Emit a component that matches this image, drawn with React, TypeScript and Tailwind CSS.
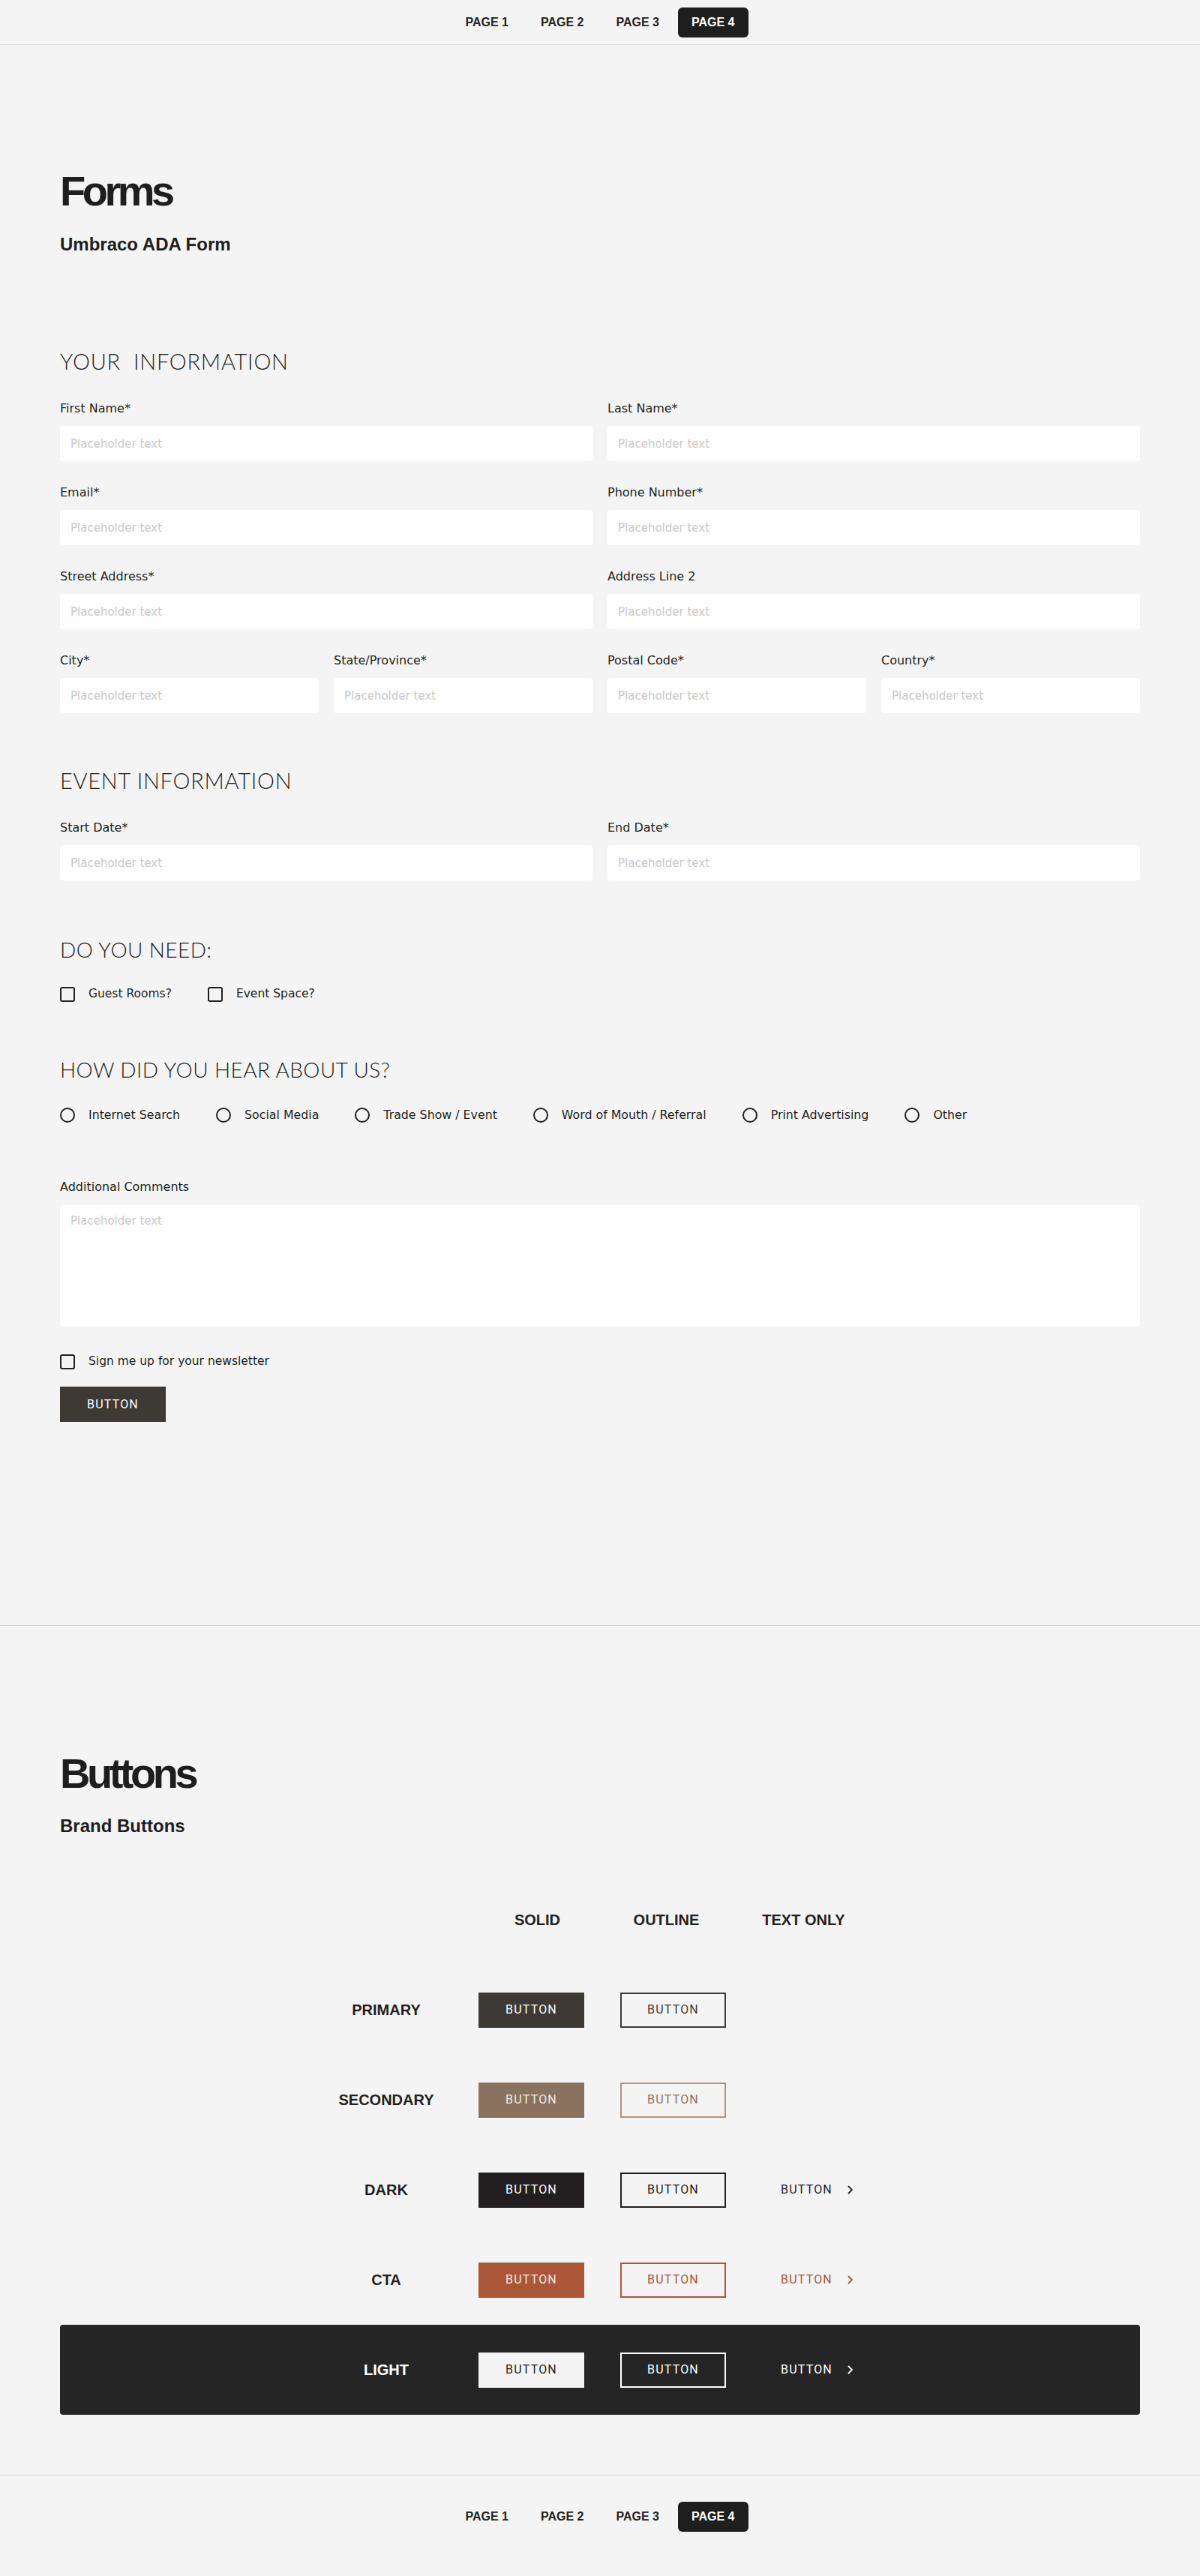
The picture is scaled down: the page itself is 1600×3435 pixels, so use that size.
import React from "react";

const arial = "font-['Liberation_Sans',Arial,sans-serif]";
const body = "font-['DejaVu_Sans',sans-serif]";
const display = "font-['Lato',sans-serif] font-light";
const btnFont = "font-['Roboto',sans-serif]";

const pages = ["PAGE 1", "PAGE 2", "PAGE 3", "PAGE 4"];

function PageNav({ top }: { top?: boolean }) {
  return (
    <nav
      className={
        top
          ? "flex justify-center gap-[7px] pt-[10px] pb-[9px] border-b border-[#dcdcdc]"
          : "flex justify-center gap-[7px] pt-[35px] pb-[60px] border-t border-[#dcdcdc]"
      }
    >
      {pages.map((p) => (
        <a
          key={p}
          href="#"
          className={`${arial} h-10 px-[18px] flex items-center rounded-md text-[16px] font-bold ${
            p === "PAGE 4" ? "bg-[#1e1e1e] text-white" : "text-[#222]"
          }`}
        >
          {p}
        </a>
      ))}
    </nav>
  );
}

function SectionTitle({
  children,
  className = "",
  small,
}: {
  children: React.ReactNode;
  className?: string;
  small?: boolean;
}) {
  return (
    <h3
      className={`${display} ${
        small ? "text-[28px] tracking-[0.015em]" : "text-[29px] tracking-[0.025em]"
      } leading-none text-[#231f20] whitespace-pre ${className}`}
    >
      {children}
    </h3>
  );
}

function Field({ label, span = "col-span-2" }: { label: string; span?: string }) {
  return (
    <div className={span}>
      <label className={`${body} block text-[16px] leading-[20px] text-[#231f20] mb-[13px]`}>{label}</label>
      <input
        readOnly
        placeholder="Placeholder text"
        className={`${body} w-full h-[47px] bg-white rounded-[4px] px-[14px] text-[15px] outline-none placeholder:text-[#c8c8c8]`}
      />
    </div>
  );
}

function Check({ label, round }: { label: string; round?: boolean }) {
  return (
    <label className="flex items-center gap-[18px] h-5">
      <span
        className={`w-5 h-5 border-2 border-[#231f20] ${round ? "rounded-full" : "rounded-[3px]"}`}
      />
      <span className={`${body} ${round ? "text-[15.8px]" : "text-[15.5px]"} text-[#231f20]`}>{label}</span>
    </label>
  );
}

function Chevron() {
  return (
    <svg width="9" height="12" viewBox="0 0 9 12" fill="none">
      <polyline points="2,1 7,6 2,11" stroke="currentColor" strokeWidth="1.8" />
    </svg>
  );
}

type Variant = {
  name: string;
  solid: string;
  outline: string;
  text?: string;
  label: string;
  row?: string;
};

const variants: Variant[] = [
  {
    name: "PRIMARY",
    solid: "bg-[#3d3935] text-white",
    outline: "border-[#3d3935] text-[#3d3935]",
    label: "text-[#231f20]",
  },
  {
    name: "SECONDARY",
    solid: "bg-[#8a725f] text-[#f1ece8]",
    outline: "border-[#ab9484] text-[#8a725f]",
    label: "text-[#231f20]",
  },
  {
    name: "DARK",
    solid: "bg-[#231f20] text-white",
    outline: "border-[#231f20] text-[#231f20]",
    text: "text-[#231f20]",
    label: "text-[#231f20]",
  },
  {
    name: "CTA",
    solid: "bg-[#ab5637] text-[#f7ebe6]",
    outline: "border-[#ab5637] text-[#ab5637]",
    text: "text-[#ab5637]",
    label: "text-[#231f20]",
  },
  {
    name: "LIGHT",
    solid: "bg-[#f4f4f4] text-[#231f20]",
    outline: "border-white text-white",
    text: "text-white",
    label: "text-white",
    row: "bg-[#252525] rounded-[4px]",
  },
];

function ButtonRow({ v }: { v: Variant }) {
  return (
    <div className={`flex justify-center items-center h-[120px] pr-[10px] ${v.row ?? ""}`}>
      <div className={`${arial} w-[170px] text-center text-[20px] font-bold ${v.label}`}>{v.name}</div>
      <button
        className={`${btnFont} ml-[38px] w-[141px] h-[47px] text-[16px] tracking-[1.2px] ${v.solid}`}
      >
        BUTTON
      </button>
      <button
        className={`${btnFont} ml-[48px] w-[141px] h-[47px] border-2 text-[16px] tracking-[1.2px] ${v.outline}`}
      >
        BUTTON
      </button>
      <div className="ml-[51px] w-[141px] flex justify-center">
        {v.text && (
          <span className={`${btnFont} flex items-center gap-[19px] text-[16px] tracking-[1.2px] ${v.text}`}>
            BUTTON
            <Chevron />
          </span>
        )}
      </div>
    </div>
  );
}

export default function App() {
  return (
    <div className="min-h-screen bg-[#f4f4f4] text-[#1e1e1e]">
      <PageNav top />

      <section className="px-20 pt-[167px] pb-[271px] border-b border-[#d6d6d6]">
        <h1 className={`${arial} text-[56px] leading-none font-bold tracking-[-0.08em]`}>Forms</h1>
        <h2 className={`${arial} text-[24px] leading-none font-bold mt-[31px]`}>Umbraco ADA Form</h2>

        <SectionTitle className="mt-[129px]">{"YOUR  INFORMATION"}</SectionTitle>
        <div className="grid grid-cols-4 gap-x-5 gap-y-[32px] mt-[39px]">
          <Field label="First Name*" />
          <Field label="Last Name*" />
          <Field label="Email*" />
          <Field label="Phone Number*" />
          <Field label="Street Address*" />
          <Field label="Address Line 2" />
          <Field label="City*" span="col-span-1" />
          <Field label="State/Province*" span="col-span-1" />
          <Field label="Postal Code*" span="col-span-1" />
          <Field label="Country*" span="col-span-1" />
        </div>

        <SectionTitle className="mt-[75px]">EVENT INFORMATION</SectionTitle>
        <div className="grid grid-cols-4 gap-x-5 mt-[39px]">
          <Field label="Start Date*" />
          <Field label="End Date*" />
        </div>

        <SectionTitle small className="mt-[78px]">DO YOU NEED:</SectionTitle>
        <div className="flex gap-[48px] mt-[36px]">
          <Check label="Guest Rooms?" />
          <Check label="Event Space?" />
        </div>

        <SectionTitle small className="mt-[76px]">HOW DID YOU HEAR ABOUT US?</SectionTitle>
        <div className="flex gap-[48px] mt-[37px]">
          {["Internet Search", "Social Media", "Trade Show / Event", "Word of Mouth / Referral", "Print Advertising", "Other"].map(
            (o) => (
              <Check key={o} label={o} round />
            )
          )}
        </div>

        <label className={`${body} block text-[16px] leading-[20px] text-[#231f20] mt-[76px]`}>
          Additional Comments
        </label>
        <textarea
          readOnly
          placeholder="Placeholder text"
          className={`${body} block w-full h-[162px] mt-[14px] bg-white rounded-[4px] px-[14px] pt-[10px] text-[15px] outline-none resize-none placeholder:text-[#c8c8c8]`}
        />

        <div className="mt-[37px]">
          <Check label="Sign me up for your newsletter" />
        </div>

        <button
          className={`${btnFont} mt-[23px] w-[141px] h-[47px] bg-[#3d3935] text-white text-[16px] tracking-[1.2px]`}
        >
          BUTTON
        </button>
      </section>

      <section className="px-20 pt-[169px] pb-[80px]">
        <h1 className={`${arial} text-[56px] leading-none font-bold tracking-[-0.08em]`}>Buttons</h1>
        <h2 className={`${arial} text-[24px] leading-none font-bold mt-[30px]`}>Brand Buttons</h2>

        <div className="mt-[53px]">
          <div className={`${arial} flex justify-center items-center h-[120px] pr-[10px] text-[20px] font-bold text-[#231f20]`}>
            <div className="w-[170px]" />
            <div className="ml-[38px] w-[141px] text-center translate-x-[8px]">SOLID</div>
            <div className="ml-[48px] w-[141px] text-center -translate-x-[9px]">OUTLINE</div>
            <div className="ml-[51px] w-[141px] text-center -translate-x-[18px]">TEXT ONLY</div>
          </div>
          {variants.map((v) => (
            <ButtonRow key={v.name} v={v} />
          ))}
        </div>
      </section>

      <PageNav />
    </div>
  );
}
